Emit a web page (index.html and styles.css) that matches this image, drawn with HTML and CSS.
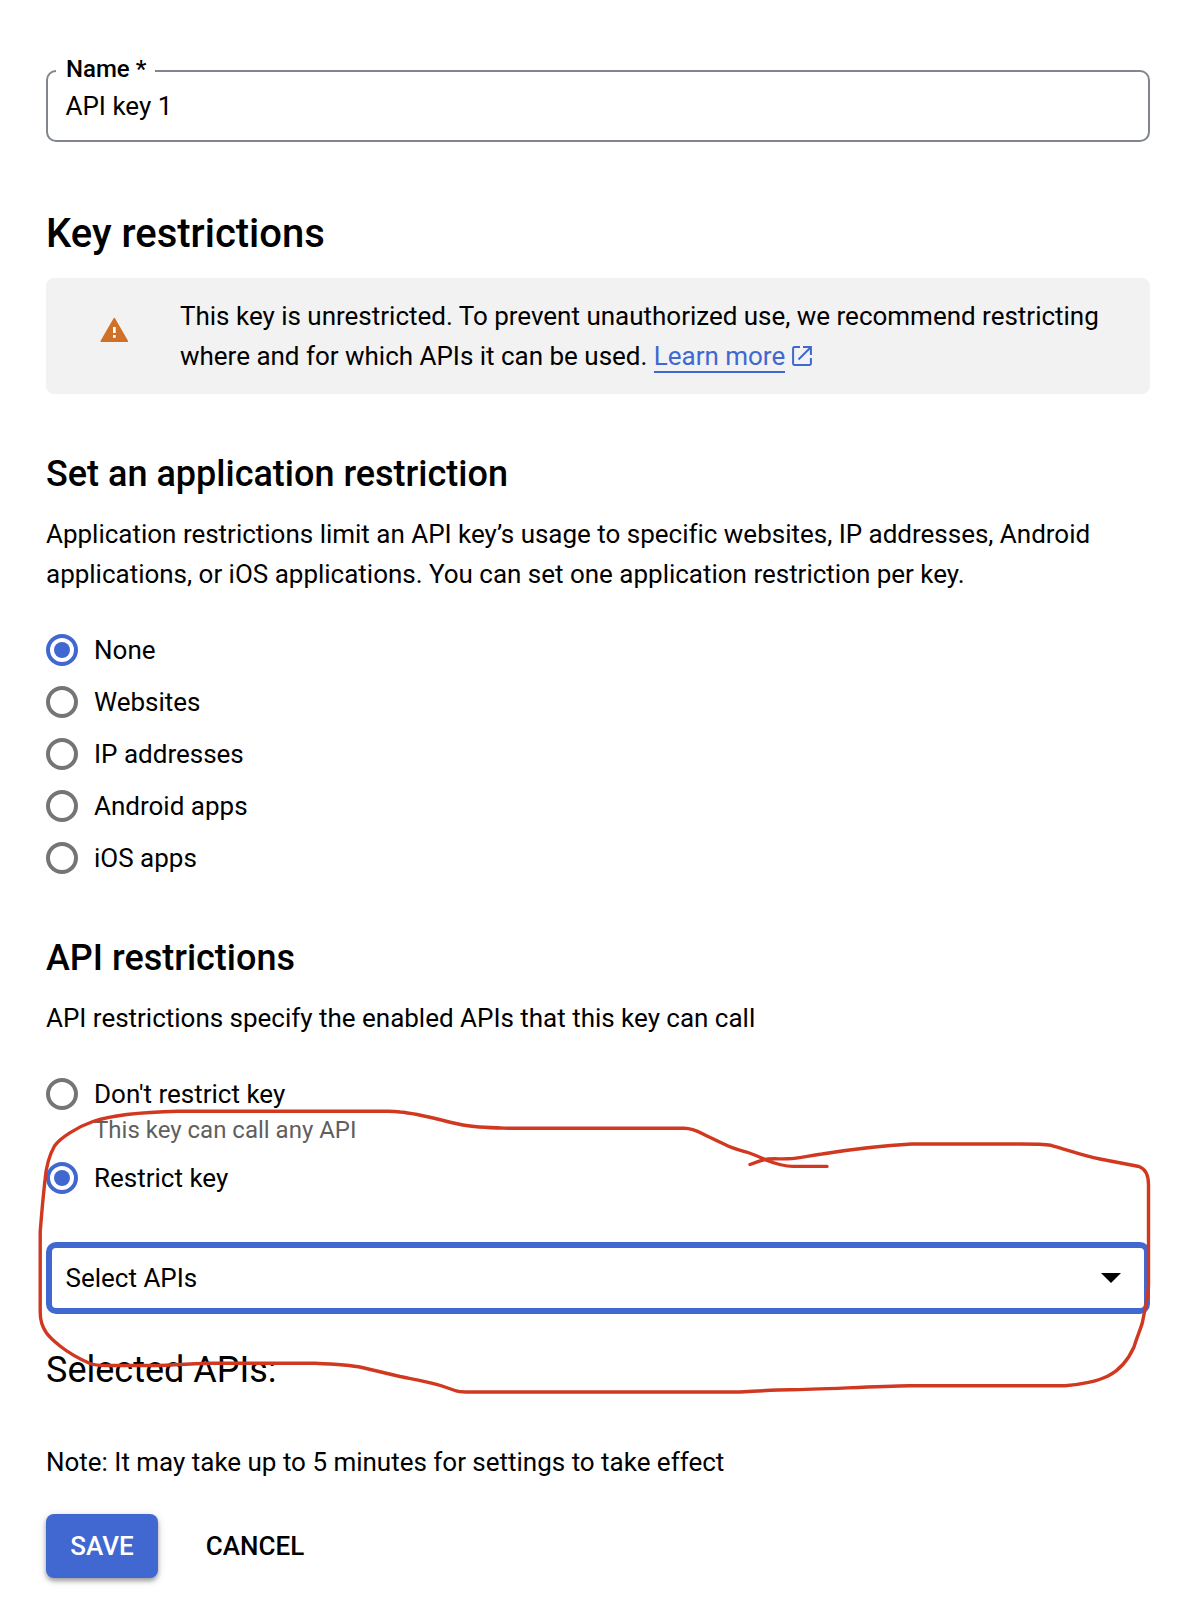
FILE: index.html
```html
<!DOCTYPE html>
<html lang="en">
<head>
<meta charset="utf-8">
<title>Edit API key</title>
<link rel="stylesheet" href="styles.css">
</head>
<body>
<main class="page">
  <div class="field">
    <span class="field-label">Name *</span>
    <span class="field-value">API key 1</span>
  </div>

  <h1 class="title">Key restrictions</h1>
  <div class="alert">
    <svg class="alert-icon" viewBox="0 0 28 26"><path fill="#cf7128" stroke="#cf7128" stroke-width="1.6" stroke-linejoin="round" d="M14.300 1.6 27.300 24.2H1.300z"/><path fill="#fff" d="M13 10h2.7v6H13zM13 18h2.7v2.8H13z"/></svg>
    <p class="alert-text">This key is unrestricted. To prevent unauthorized use, we recommend restricting<br>where and for which APIs it can be used. <a class="link" href="#">Learn more</a><svg class="link-icon" viewBox="0 0 20 20"><path fill="none" stroke="#4068d0" stroke-width="2" d="M8 1.1H2.2a1.1 1.1 0 0 0-1.1 1.1v15.6a1.1 1.1 0 0 0 1.1 1.1h15.6a1.1 1.1 0 0 0 1.1-1.1V12M11 1.1h7.9V9M18.5 1.5 6.5 13.5"/></svg></p>
  </div>

  <h2 class="subtitle">Set an application restriction</h2>
  <p class="text">Application restrictions limit an API key’s usage to specific websites, IP addresses, Android<br>applications, or iOS applications. You can set one application restriction per key.</p>
  <div class="options">
    <label class="option"><span class="radio radio-on"></span>None</label>
    <label class="option"><span class="radio"></span>Websites</label>
    <label class="option"><span class="radio"></span>IP addresses</label>
    <label class="option"><span class="radio"></span>Android apps</label>
    <label class="option"><span class="radio"></span>iOS apps</label>
  </div>

  <h2 class="subtitle subtitle-api">API restrictions</h2>
  <p class="text">API restrictions specify the enabled APIs that this key can call</p>
  <div class="options">
    <label class="option"><span class="radio"></span>Don't restrict key</label>
    <p class="hint">This key can call any API</p>
    <label class="option"><span class="radio radio-on"></span>Restrict key</label>
  </div>

  <div class="select">
    <span>Select APIs</span>
    <svg class="arrow" viewBox="0 0 20 10"><path d="M0 0h20L10 10z"/></svg>
  </div>

  <h2 class="selected">Selected APIs:</h2>
  <p class="text note">Note: It may take up to 5 minutes for settings to take effect</p>
  <div class="actions">
    <button class="btn btn-primary">SAVE</button>
    <button class="btn btn-text">CANCEL</button>
  </div>

  <svg class="annotation" viewBox="0 0 1192 1598"><path d="M827 1166.4H793C784 1166.4 776 1164 765.7 1160C760 1157 755 1155 748 1152.5C742 1150.500 734 1149 726 1145L706 1135.500C699 1132 694 1128.300 684 1128.200H508C490 1127.700 476 1127.500 463 1125C445 1121.500 420 1113.500 400 1112C396 1111.400 392 1111.200 388 1111.200H178C145 1112 110 1115.500 93 1121.500C77 1127 60 1138 54.500 1146C50 1154 46 1168 45 1180C43 1198 41.500 1215 40.200 1232V1312C40.200 1330 50 1338 60 1346C70 1354 82 1360 90 1363.500C95 1365.500 100 1365.500 107 1365.500H160C180 1364.500 195 1363.500 210 1363.300H315C331 1364 350 1365 362 1367.500L400 1376.500C412 1379 430 1382 442 1386L455 1390.500C459 1392 461 1392 466 1392H740C757 1391 775 1390 790 1389.800C820 1389.500 870 1386.500 910 1385.700H1065C1080 1385 1098 1381 1108 1376C1120 1370 1129 1358 1134 1347C1137 1337 1141 1328 1142.500 1322L1147 1299C1148.500 1293 1148.500 1290 1148.500 1284V1185C1148.500 1177 1146 1169 1139 1166.500L1100 1159C1082 1155.500 1068 1150 1051 1145.300C1043 1144 1034 1144 1020 1144H912C885 1145.500 850 1149.500 822 1154C807 1156 799 1158.700 788 1158.800C777 1159.200 770 1158 763 1160C758 1161.500 754 1163 750 1164.500"/></svg>
</main>
</body>
</html>
```

FILE: styles.css
```css
* {
  box-sizing: border-box;
}

body {
  margin: 0;
  background: #fff;
  color: #000;
  font: 400 26px/40px Roboto, sans-serif;
}

h1, h2, p {
  margin: 0;
}

.page {
  position: relative;
  height: 1598px;
  overflow: hidden;
  padding: 70px 42px 0 46px;
}

.field {
  position: relative;
  height: 72px;
  border: 2px solid #80868b;
  border-radius: 10px;
  padding: 14px 17.5px;
}

.field-label {
  position: absolute;
  top: -19px;
  left: 8px;
  width: 99px;
  padding-left: 10px;
  background: #fff;
  font-size: 24px;
  font-weight: 500;
  line-height: 32px;
}

.field-value {
  display: block;
}

.title {
  margin-top: 68px;
  font-size: 40px;
  font-weight: 500;
  line-height: 48px;
}

.alert {
  display: flex;
  margin-top: 20px;
  padding: 18px 0 18px 54px;
  border-radius: 8px;
  background: #f2f2f2;
}

.alert-icon {
  flex: none;
  width: 28px;
  height: 26px;
  margin: 21px 52px 0 0;
}

.alert-text {
  letter-spacing: -0.012px;
  white-space: nowrap;
}

.link {
  border-bottom: 2px solid #4068d0;
  color: #4068d0;
  text-decoration: none;
}

.link-icon {
  width: 20px;
  height: 20px;
  margin-left: 6.5px;
  vertical-align: -1px;
}

.subtitle {
  margin-top: 56px;
  font-size: 36px;
  font-weight: 500;
  line-height: 48px;
}

.subtitle-api {
  margin-top: 50px;
}

.text {
  margin-top: 16px;
  letter-spacing: -0.012px;
  white-space: nowrap;
}

.options {
  margin-top: 30px;
}

.option {
  display: flex;
  align-items: center;
  gap: 16px;
  height: 52px;
}

.radio {
  width: 32px;
  height: 32px;
  border: 4px solid #757575;
  border-radius: 50%;
}

.radio-on {
  border-color: #4068d0;
  background: #4068d0;
  background-clip: content-box;
  padding: 4px;
}

.hint {
  margin: -6px 0 6px 48px;
  color: #5f5f5f;
  font-size: 24px;
  line-height: 32px;
}

.select {
  display: flex;
  align-items: center;
  justify-content: space-between;
  height: 72px;
  margin-top: 38px;
  padding: 0 23px 0 13.5px;
  border: 6px solid #4068d0;
  border-radius: 10px;
}

.arrow {
  width: 20px;
  height: 10px;
}

.selected {
  margin-top: 32px;
  font-size: 36px;
  font-weight: 400;
  line-height: 48px;
}

.note {
  margin-top: 48px;
}

.actions {
  display: flex;
  gap: 16px;
  margin-top: 32px;
}

.btn {
  height: 64px;
  padding: 0;
  border: 0;
  border-radius: 8px;
  background: none;
  color: #000;
  font: 500 26px/64px Roboto, sans-serif;
}

.btn-primary {
  width: 112px;
  background: #4068d0;
  color: #fff;
  box-shadow: 0 3px 4px rgba(0, 0, 0, 0.3), 0 2px 10px rgba(0, 0, 0, 0.15);
}

.btn-text {
  width: 162px;
}

.annotation {
  position: absolute;
  top: 0;
  left: 0;
  width: 1192px;
  height: 1598px;
  fill: none;
  stroke: #d03820;
  stroke-width: 3.4;
  stroke-linecap: round;
  stroke-linejoin: round;
  pointer-events: none;
}
```
